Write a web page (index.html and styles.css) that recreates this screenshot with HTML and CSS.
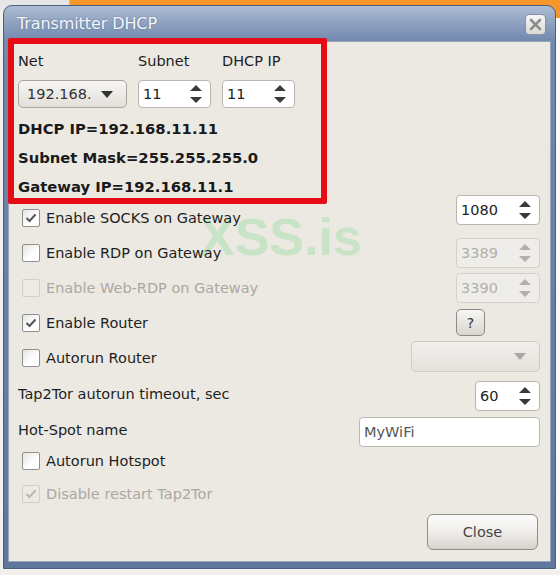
FILE: index.html
```html
<!DOCTYPE html>
<html>
<head>
<meta charset="utf-8">
<title>Transmitter DHCP</title>
<link rel="stylesheet" href="styles.css">
</head>
<body>
<div class="bg-left"></div>
<div class="bg-orange"></div>
<div class="bg-right"></div>
<div class="window">
  <div class="titlebar">
    <span class="title">Transmitter DHCP</span>
    <span class="close-x">
      <svg width="13" height="13" viewBox="0 0 13 13"><path d="M2 2 L11 11 M11 2 L2 11" stroke="#8d8d8d" stroke-width="2.6" stroke-linecap="round"/></svg>
    </span>
  </div>
  <div class="client">
    <div class="watermark">XSS.is</div>
    <div class="content">
      <div class="net-grid">
        <span class="lbl">Net</span>
        <span class="lbl">Subnet</span>
        <span class="lbl">DHCP IP</span>
        <div class="combo"><span>192.168.</span><svg class="combo-arrow" width="12" height="7" viewBox="0 0 12 7"><path d="M0 0 H12 L6 7 Z" fill="#333"/></svg></div>
        <div class="spin"><span>11</span><svg class="arrows" width="12" height="20" viewBox="0 0 12 20"><path d="M0 7 L6 1 L12 7 Z M0 13 H12 L6 19 Z" fill="#3a3a3a"/></svg></div>
        <div class="spin"><span>11</span><svg class="arrows" width="12" height="20" viewBox="0 0 12 20"><path d="M0 7 L6 1 L12 7 Z M0 13 H12 L6 19 Z" fill="#3a3a3a"/></svg></div>
      </div>
      <div class="info">
        <div>DHCP IP=192.168.11.11</div>
        <div>Subnet Mask=255.255.255.0</div>
        <div>Gateway IP=192.168.11.1</div>
      </div>

      <div class="row r35">
        <label class="check"><span class="box"><svg width="14" height="14" viewBox="0 0 14 14"><path d="M2.5 7 L5.5 10 L11.5 3.5" fill="none" stroke="#555" stroke-width="2"/></svg></span>Enable SOCKS on Gateway</label>
        <div class="spin wide up"><span>1080</span><svg class="arrows" width="12" height="20" viewBox="0 0 12 20"><path d="M0 7 L6 1 L12 7 Z M0 13 H12 L6 19 Z" fill="#3a3a3a"/></svg></div>
      </div>
      <div class="row r35">
        <label class="check"><span class="box"></span>Enable RDP on Gateway</label>
        <div class="spin wide disabled"><span>3389</span><svg class="arrows" width="12" height="20" viewBox="0 0 12 20"><path d="M0 7 L6 1 L12 7 Z M0 13 H12 L6 19 Z" fill="#b2b0ab"/></svg></div>
      </div>
      <div class="row r35">
        <label class="check disabled"><span class="box"></span>Enable Web-RDP on Gateway</label>
        <div class="spin wide disabled"><span>3390</span><svg class="arrows" width="12" height="20" viewBox="0 0 12 20"><path d="M0 7 L6 1 L12 7 Z M0 13 H12 L6 19 Z" fill="#b2b0ab"/></svg></div>
      </div>
      <div class="row r35">
        <label class="check"><span class="box"><svg width="14" height="14" viewBox="0 0 14 14"><path d="M2.5 7 L5.5 10 L11.5 3.5" fill="none" stroke="#555" stroke-width="2"/></svg></span>Enable Router</label>
        <div class="help-slot"><button class="help">?</button></div>
      </div>
      <div class="row r35">
        <label class="check"><span class="box"></span>Autorun Router</label>
        <div class="combo disabled-combo"><span></span><svg class="combo-arrow" width="12" height="7" viewBox="0 0 12 7"><path d="M0 0 H12 L6 7 Z" fill="#a9a7a2"/></svg></div>
      </div>
      <div class="row r-timeout">
        <span class="plain">Tap2Tor autorun timeout, sec</span>
        <div class="spin small"><span>60</span><svg class="arrows" width="12" height="20" viewBox="0 0 12 20"><path d="M0 7 L6 1 L12 7 Z M0 13 H12 L6 19 Z" fill="#3a3a3a"/></svg></div>
      </div>
      <div class="row r-hotspot">
        <span class="plain">Hot-Spot name</span>
        <div class="textbox">MyWiFi</div>
      </div>
      <div class="row r-autohot">
        <label class="check"><span class="box"></span>Autorun Hotspot</label>
      </div>
      <div class="row r-disable">
        <label class="check disabled"><span class="box"><svg width="14" height="14" viewBox="0 0 14 14"><path d="M2.5 7 L5.5 10 L11.5 3.5" fill="none" stroke="#b9b7b2" stroke-width="2"/></svg></span>Disable restart Tap2Tor</label>
      </div>
      <div class="footer">
        <button class="btn">Close</button>
      </div>
    </div>
    <div class="highlight"></div>
  </div>
</div>
</body>
</html>
```
FILE: styles.css
```css
* { box-sizing: border-box; }
html, body { margin: 0; padding: 0; }
body {
  width: 560px;
  height: 575px;
  background: #f3f1ed;
  font-family: "DejaVu Sans", sans-serif;
  font-size: 14.5px;
  color: #1e1e1e;
  position: relative;
  overflow: hidden;
}
.bg-left { position: absolute; left: 0; top: 0; width: 70px; height: 10px; background: #e6e6e6; border-right: 1px solid #b9b9b9; }
.bg-orange { position: absolute; left: 70px; top: 0; width: 490px; height: 18px; background: #f6962b; }
.bg-right { position: absolute; right: 0; top: 18px; width: 8px; height: 552px; background: #fafafa; }

.window {
  position: absolute;
  left: 3px;
  top: 5px;
  width: 553px;
  height: 564px;
  border: 1px solid #4b5e84;
  border-radius: 9px 9px 0 0;
  background: linear-gradient(#aebdd3 0, #8da0bf 18px, #7088ad 36px, #60769c 100%);
  display: flex;
  flex-direction: column;
  padding: 0 4px 6px 4px;
}
.titlebar {
  height: 35px;
  flex: none;
  display: flex;
  align-items: center;
  justify-content: space-between;
  padding: 0 5px 0 9px;
}
.title {
  color: #f4f6fa;
  font-size: 16px;
  text-shadow: 0 0 2px rgba(60, 80, 110, 0.6);
  letter-spacing: -0.1px;
}
.close-x {
  width: 21px;
  height: 21px;
  border-radius: 4px;
  border: 1px solid #8391aa;
  background: linear-gradient(#f7f7f6, #dcdad6);
  display: flex;
  align-items: center;
  justify-content: center;
  margin-top: 1px;
}
.client {
  flex: 1;
  position: relative;
  background: #ece9e3;
  border: 1px solid #98a6bd;
  padding: 0 10px 0 9px;
}
.content { position: relative; z-index: 1; display: flex; flex-direction: column; }
.watermark {
  position: absolute;
  left: 191px;
  top: 169px;
  z-index: 0;
  font-family: "Liberation Sans", sans-serif;
  font-weight: bold;
  font-size: 52px;
  line-height: 52px;
  color: #c8e3c6;
}
.highlight {
  position: absolute;
  left: -1px;
  top: -4px;
  width: 319px;
  height: 166px;
  border: 6px solid #e60b14;
  border-radius: 2px;
  z-index: 2;
}

.net-grid {
  margin-top: 9px;
  display: grid;
  grid-template-columns: 109px 73px 73px;
  grid-template-rows: 20px 28px;
  column-gap: 11px;
  row-gap: 9px;
}
.lbl { line-height: 20px; }

.combo {
  height: 28px;
  border: 1px solid #a8a59e;
  border-radius: 5px;
  background: linear-gradient(#f7f6f4, #e2dfd9);
  display: flex;
  align-items: center;
  justify-content: space-between;
  padding: 0 13px 0 8px;
  color: #333;
}
.spin {
  height: 28px;
  border: 1px solid #b8b5ae;
  border-radius: 4px;
  background: #fff;
  display: flex;
  align-items: center;
  justify-content: space-between;
  padding: 0 8px 0 4px;
  color: #222;
}
.spin.wide { width: 84px; height: 30px; }
.spin.small { width: 65px; height: 30px; }
.spin.up { align-self: flex-start; margin-top: -5px; }
.spin.disabled { background: #efede9; border-color: #d4d1cb; color: #b2b0ab; }

.info {
  margin-top: 6px;
  height: 86px;
  font-weight: bold;
  font-size: 14.8px;
  line-height: 29px;
  color: #1a1a1a;
}

.row {
  display: flex;
  align-items: center;
  justify-content: space-between;
}
.r35 { height: 35px; }
.r-timeout { height: 37px; }
.r-timeout .spin { margin-top: 4px; }
.r-hotspot { height: 36px; }
.r-hotspot .textbox { margin-top: 4px; }
.r-autohot { height: 25px; }
.r-disable { height: 34px; margin-top: 4px; }

.check {
  display: flex;
  align-items: center;
  gap: 6px;
  padding-left: 4px;
}
.box {
  width: 18px;
  height: 18px;
  border: 1px solid #8f9090;
  border-radius: 2px;
  background: linear-gradient(135deg, #e4e4e2, #ffffff 60%);
  display: flex;
  align-items: center;
  justify-content: center;
}
.check.disabled { color: #aaa8a3; }
.check.disabled .box { border-color: #d2cfc9; background: #edeae5; }

.plain { padding-left: 0; }

.help-slot { width: 84px; display: flex; }
.help {
  width: 29px;
  height: 27px;
  border: 1px solid #8c8a86;
  border-radius: 5px;
  background: linear-gradient(#f8f7f5, #d8d5cf);
  font-family: "DejaVu Sans", sans-serif;
  font-size: 14px;
  color: #333;
  padding: 0;
}
.disabled-combo {
  width: 129px;
  height: 31px;
  border-color: #cfccc6;
  background: linear-gradient(#f2f0ec, #e4e1dc);
  margin-top: -3px;
}
.textbox {
  width: 181px;
  height: 30px;
  border: 1px solid #bdbab3;
  border-radius: 4px;
  background: #fff;
  color: #555;
  display: flex;
  align-items: center;
  padding-left: 4px;
}
.footer {
  margin-top: 3px;
  display: flex;
  justify-content: flex-end;
  padding-right: 2px;
}
.btn {
  width: 111px;
  height: 36px;
  border: 1px solid #8f8d89;
  border-radius: 6px;
  background: linear-gradient(#fbfbfa, #f0eeeb 50%, #d6d3cd);
  font-family: "DejaVu Sans", sans-serif;
  font-size: 14.5px;
  color: #444;
}
```
